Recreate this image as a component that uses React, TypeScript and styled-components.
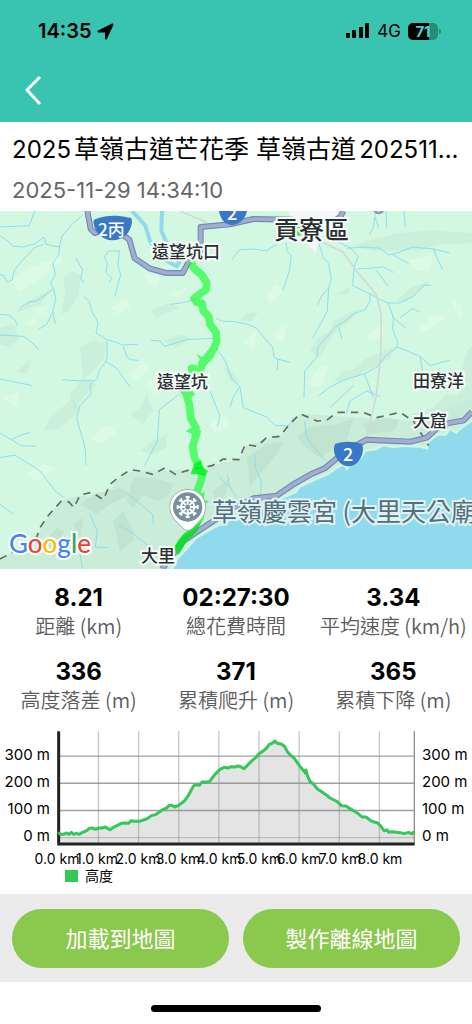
import React from "react";
import styled, { createGlobalStyle } from "styled-components";

const GlobalStyle = createGlobalStyle`
  * { box-sizing: border-box; }
  body {
    margin: 0;
    background: #ffffff;
    color: #000000;
    font-family: Inter, "Noto Sans CJK TC", sans-serif;
  }
  h1, p, dl, dd, dt { margin: 0; }
`;

const Screen = styled.main`
  display: flex;
  flex-direction: column;
  min-height: 100vh;
`;

/* ---------- header ---------- */

const Header = styled.header`
  background: #38c4b0;
  height: 122px;
`;

const StatusBar = styled.div`
  display: flex;
  justify-content: space-between;
  align-items: center;
  height: 62px;
  padding: 0 31px 0 38px;
`;

const StatusGroup = styled.div<{ $gap: number }>`
  display: flex;
  align-items: center;
  gap: ${(p) => p.$gap}px;
`;

const Clock = styled.span`
  font-size: 20px;
  line-height: 24px;
  font-weight: 600;
`;

const Network = styled.span`
  font-size: 17px;
  line-height: 24px;
`;

const BatteryWrap = styled.span`
  display: flex;
  align-items: center;
  gap: 1px;
`;

const Battery = styled.span`
  width: 30px;
  height: 17px;
  border-radius: 5px;
  background: linear-gradient(90deg, #000000 71%, #278a7b 71%);
  color: #4fd6c3;
  font-size: 15px;
  line-height: 17px;
  font-weight: 700;
  text-align: center;
`;

const BatteryTip = styled.span`
  width: 2px;
  height: 5px;
  border-radius: 0 2px 2px 0;
  background: #278a7b;
`;

const BackButton = styled.button`
  display: block;
  margin: 8px 0 0 16px;
  padding: 4px 8px;
  border: 0;
  background: none;
  svg { display: block; }
`;

/* ---------- title ---------- */

const TitleBlock = styled.section`
  height: 89px;
  padding: 10px 12px 0;
`;

const Title = styled.h1`
  font-size: 24px;
  line-height: 34px;
  font-weight: 400;
  white-space: nowrap;
  overflow: hidden;
  text-autospace: normal;
`;

const Han = styled.span`
  font-size: 25px;
`;

const RecordedAt = styled.p`
  margin-top: 10px;
  font-size: 22px;
  line-height: 26px;
  color: #666666;
`;

/* ---------- map ---------- */

const MapFrame = styled.section`
  position: relative;
  overflow: hidden;
  aspect-ratio: 472 / 358;
  background: #d3f8e2;
`;

const MapDrawing = styled.svg`
  display: block;
  width: 100%;
  height: 100%;
`;

const MapLabel = styled.span<{ $x: number; $y: number; $size: number; $tone?: string; $halo?: string; $weight?: number }>`
  position: absolute;
  left: ${(p) => (p.$x / 472) * 100}%;
  top: ${(p) => (p.$y / 358) * 100}%;
  transform: translateY(-50%);
  font-family: "Noto Sans CJK TC", sans-serif;
  font-size: ${(p) => p.$size}px;
  line-height: 1;
  font-weight: ${(p) => p.$weight ?? 500};
  color: ${(p) => p.$tone ?? "#2b2f33"};
  -webkit-text-stroke: 4px ${(p) => p.$halo ?? "#f4fbf7"};
  paint-order: stroke fill;
  white-space: nowrap;
`;

const ShieldText = styled(MapLabel)`
  -webkit-text-stroke: 0;
`;

const GoogleMark = styled.span`
  position: absolute;
  left: 9px;
  bottom: 9px;
  font-family: Lato, sans-serif;
  font-size: 26px;
  line-height: 34px;
  font-weight: 500;
  -webkit-text-stroke: 4px #ffffff;
  paint-order: stroke fill;
`;

const Letter = styled.span<{ $c: string }>`
  color: ${(p) => p.$c};
`;

/* ---------- statistics ---------- */

const Stats = styled.dl`
  display: grid;
  grid-template-columns: repeat(3, 1fr);
  row-gap: 18px;
  padding: 15px 0 0;
`;

const Stat = styled.div`
  display: flex;
  flex-direction: column-reverse;
  text-align: center;
`;

const StatLabel = styled.dt`
  font-family: "Noto Sans CJK TC", sans-serif;
  font-size: 20px;
  line-height: 28px;
  font-weight: 350;
  color: #5c5c5c;
  white-space: nowrap;
`;

const StatValue = styled.dd`
  font-size: 24px;
  line-height: 28px;
  font-weight: 700;
`;

/* ---------- elevation chart ---------- */

const ChartDrawing = styled.svg`
  display: block;
  width: 100%;
  margin-top: 14px;
  font-family: Inter, "Noto Sans CJK TC", sans-serif;
  font-size: 14px;
`;

/* ---------- actions ---------- */

const Actions = styled.footer`
  display: grid;
  grid-template-columns: 1fr 1fr;
  gap: 14px;
  margin-top: 4px;
  padding: 15px 12px 14px;
  background: #ebebeb;
`;

const ActionButton = styled.button`
  height: 59px;
  padding: 0 0 4px;
  border: 0;
  border-radius: 30px;
  background: #8bc84e;
  color: #ffffff;
  font-family: "Noto Sans CJK TC", sans-serif;
  font-size: 22px;
  font-weight: 400;
`;

const HomeIndicator = styled.div`
  width: 36%;
  height: 7px;
  margin: 23px auto 12px;
  border-radius: 4px;
  background: #000000;
`;

/* ---------- data ---------- */

const stats = [
  { value: "8.21", label: "距離 (km)" },
  { value: "02:27:30", label: "總花費時間" },
  { value: "3.34", label: "平均速度 (km/h)" },
  { value: "336", label: "高度落差 (m)" },
  { value: "371", label: "累積爬升 (m)" },
  { value: "365", label: "累積下降 (m)" },
];

const profile =
  "176,336 181,343 190,343 200,339 207,343 214,337 221,343 230,340 238,343 248,337 260,332 268,325 278,324 286,328 296,324 306,324 316,321 322,325 330,329 340,322 352,316 364,310 374,309 386,310 393,302 402,304 418,304 430,300 442,296 454,287 466,284 478,276 490,268 500,264 506,257 516,256 524,261 534,257 544,250 554,242 564,228 572,214 579,200 586,194 598,196 606,186 616,186 628,185 638,172 648,160 660,148 672,142 684,144 694,140 704,141 714,138 724,141 732,146 742,136 756,122 768,112 776,102 788,94 800,84 808,73 820,68 824,63 832,70 846,73 854,80 862,95 872,106 882,114 892,128 902,142 912,154 917,160 918,150 922,166 930,184 942,194 952,207 966,216 978,224 990,234 1002,240 1012,245 1024,257 1038,258 1050,266 1064,274 1076,282 1086,291 1098,291 1112,302 1122,306 1132,308 1142,318 1152,332 1162,330 1166,337 1176,335 1190,337 1200,338 1212,341 1226,337 1236,342 1240,337 1244,338";

const terrain = {
  dark: [
    "M190,200 220,180 244,196 236,250 206,300 184,310 196,250Z",
    "M240,410 280,386 318,400 312,440 280,480 250,500 244,450Z",
    "M210,550 250,500 290,520 250,560 222,600Z",
    "M0,350 40,340 56,380 30,410 0,400Z",
    "M150,620 220,560 240,600 180,650 130,660Z",
    "M50,480 96,440 80,490Z",
    "M100,260 160,230 120,280 60,300Z",
    "M490,390 540,370 572,380 530,410Z",
    "M450,300 500,276 540,290 470,320Z",
    "M1055,105 1120,85 1200,66 1300,58 1416,66 1416,96 1320,100 1260,118 1120,120Z",
    "M716,330 740,310 776,300 756,330Z",
    "M930,420 950,384 990,360 1000,330 1080,290 1070,310 1000,370 960,440Z",
    "M1000,510 1030,480 1060,476 1100,440 1190,404 1170,440 1080,490 1030,510Z",
    "M1190,270 1230,230 1290,210 1260,240 1220,270Z",
    "M1010,250 1050,224 1044,250Z",
    "M1384,480 1400,420 1416,404 1416,560 1370,556 1400,520Z",
    "M390,610 420,590 440,550 460,600 430,640Z",
    "M420,720 460,690 500,670 500,710 460,730Z",
    "M1230,610 1300,590 1340,550 1416,560 1416,620 1330,640 1250,640Z",
    "M670,460 700,490 720,520 690,510Z",
  ],
  light: [
    "M30,210 90,170 170,140 190,150 120,200 60,240Z",
    "M70,336 100,320 110,340 90,350Z",
    "M90,300 150,280 130,310Z",
    "M330,290 380,260 390,290 350,310Z",
    "M390,490 430,450 450,470 410,510Z",
    "M500,250 560,230 540,260Z",
    "M420,180 480,200 470,240Z",
    "M800,250 830,220 850,240 810,280Z",
    "M820,370 860,340 850,400Z",
    "M920,520 960,470 990,460 960,530Z",
    "M1100,370 1150,340 1150,380 1110,390Z",
    "M1250,360 1300,310 1340,320 1280,360Z",
    "M1350,260 1390,290 1380,330Z",
    "M270,680 330,640 350,670 300,700Z",
    "M80,790 130,760 170,770 110,810Z",
    "M630,640 670,610 690,640 650,670Z",
    "M1220,150 1300,130 1290,180 1250,180Z",
    "M440,520 480,490 520,500 460,550Z",
    "M730,390 770,360 760,420Z",
    "M10,560 60,540 50,590Z",
  ],
  ridge: [
    "M240,880 280,850 360,830 390,850 330,880 290,910Z",
    "M400,800 460,800 520,820 500,860 470,870 430,850 400,890 380,870Z",
    "M340,930 370,900 400,960 400,990 360,1020Z",
    "M740,740 800,700 850,690 830,730 780,790 750,830Z",
    "M890,680 920,650 1010,640 1060,620 1040,690 960,740 930,720Z",
    "M1090,640 1160,620 1200,626 1180,660 1100,670Z",
    "M130,1000 170,950 190,960 160,1030Z",
    "M220,940 250,920 240,980Z",
    "M640,840 690,800 670,870 650,900Z",
  ],
};

const rivers = [
  "M0,48 88,44 104,0",
  "M0,74 24,90 40,106 70,108 106,98 132,78 138,100 178,108 186,76 214,42 248,12",
  "M0,190 12,194 22,214 36,208 44,176 66,150 104,110 132,100",
  "M178,108 176,132 158,156 166,190 152,216 160,232 148,244 108,270 90,272 66,286 56,302",
  "M160,232 168,264 158,300 166,338 M158,304 140,340 114,356",
  "M0,310 26,312 44,326 54,346",
  "M0,372 70,376 98,396 116,416",
  "M228,142 248,178 242,202 252,216",
  "M252,256 268,272 276,302 294,334 288,366 320,386 322,436 316,454 298,478 292,502 270,520 274,548 240,584 230,620 238,650 250,690 256,718 258,762",
  "M322,386 350,394 368,402 382,440 392,446 416,448 M370,402 412,400",
  "M316,450 350,472 390,528",
  "M0,504 40,512 98,524 M186,506 240,510 278,508",
  "M360,120 326,120 312,138 322,156 318,184 336,202 328,214 M358,120 354,166 362,190 344,256",
  "M512,280 544,276 590,264",
  "M452,388 480,390 494,406 560,386 640,382",
  "M648,322 664,330 700,332 744,340 770,352 818,410 822,438 834,446 832,478 M832,444 870,454",
  "M650,414 676,450 696,504 720,528 700,556 690,590",
  "M720,528 730,590 800,618 826,644 866,644 880,620",
  "M630,540 660,616 652,646",
  "M696,146 718,116 760,114 800,120 834,96",
  "M858,96 862,122 874,134 868,180 848,240",
  "M956,94 970,140 986,158 994,204 986,230 982,300 938,382 M984,232 966,254 952,282",
  "M1000,86 1050,110 1074,136 1062,170 1058,224 1088,238 1110,248 1110,270 1096,296 1062,308 1034,332 1010,344 954,408 950,440 914,480 912,560 M1016,350 1026,384",
  "M1040,112 1094,108 1140,112 1166,132 1186,128 1236,108 1300,114 1350,126 M1180,132 1226,158 M1300,114 1318,156 1328,176",
  "M1074,174 1150,168 1180,184 M1128,176 1164,226",
  "M1110,248 1140,266 1166,276 1200,276 1240,256 1272,222 1292,224",
  "M1164,276 1180,318 1178,356 1192,390 1192,408 1260,436 1290,464 1348,448 M1176,316 1218,352 M1200,320 1238,292 1260,304 M1260,436 1268,480",
  "M1192,408 1156,436 1134,466 1094,488 1030,508 988,530 956,554 M1094,490 1120,560",
  "M1126,6 1120,50 1108,70 M1126,20 1136,50 M1158,0 1160,50 M1212,0 1216,46",
  "M0,666 34,686 64,672 90,664 M34,686 64,704 106,706",
  "M0,740 44,732 86,758 120,780 166,840 194,862 M0,880 40,910",
  "M540,548 478,596 472,690 434,764",
  "M380,846 458,910 460,940 M270,910 292,960 286,1008 322,1010 M240,1030 248,1074",
  "M354,940 400,968 450,1010",
  "M660,800 690,830 718,870 M682,790 690,830",
  "M914,630 920,680 944,710 976,750",
  "M990,590 1060,524 M1040,606 1050,570 1100,540 1140,556",
  "M764,730 766,770 784,810 782,850",
];

const coast =
  "M520,1074 534,1046 560,1018 590,984 640,954 700,926 750,904 796,884 848,864 890,846 900,830 940,812 990,790 1010,774 1030,764 1040,778 1062,758 1086,742 1098,722 1130,718 1150,706 1180,712 1210,708 1260,710 1284,716 1288,694 1314,674 1340,674 1350,658 1370,670 1380,658 1416,632V1074Z";

const boundary =
  "M0,1044 50,1018 110,980 120,950 146,912 184,870 206,872 222,890 240,852 276,844 310,866 330,820 360,796 392,776 420,780 458,790 496,770 526,790 570,776 636,764 670,744 716,746 736,700 770,706 800,680 840,676 860,650 900,608 950,630 980,628 1010,604 1090,604 1130,620 1200,604 1240,630 1286,704";

const mainRoads = [
  "M262,0 272,54 284,66 344,54 388,86 404,142 448,172 498,186 548,186 570,146 602,120 602,48 690,40 760,24 880,26",
  "M996,36 1022,16 1030,0",
  "M486,1074 550,990 640,930 700,892 760,862 830,854 880,820 936,788 974,772 1010,742 1060,708 1100,686 1232,692 1280,680 1324,640 1392,628 1416,602",
];

const route =
  "M572,154 584,174 606,192 620,216 618,236 582,262 590,274 606,276 610,300 626,316 630,340 648,364 650,390 642,412 622,438 606,456 602,476 584,490 570,512 558,546 568,580 572,620 588,652 586,680 578,706 584,742 600,770 606,800 590,846 606,880 600,920 576,960 546,990 530,1018";

function MapArt() {
  return (
    <MapDrawing viewBox="0 0 1416 1074" preserveAspectRatio="xMidYMid slice" aria-hidden="true">
      <path d="M0,1050 120,960 146,912 184,870 240,852 310,866 360,796 400,780 570,776 716,746 736,706 840,676 900,608 1240,630 1416,560V1074H0Z" fill="#c9edd9" />
      {terrain.dark.map((d) => <path key={d} d={d} fill="#c4e9d5" opacity=".6" />)}
      {terrain.light.map((d) => <path key={d} d={d} fill="#e0fbe5" opacity=".7" />)}
      {terrain.ridge.map((d) => <path key={d} d={d} fill="#bcdfcc" opacity=".7" />)}
      <path d={coast} fill="#90daee" stroke="#d0f5e0" strokeWidth="16" paintOrder="stroke" strokeLinejoin="round" />
      <path d="M868,0 1030,0 1010,40 956,80 948,128 920,96 870,80Z" fill="#f4f6f7" />
      <path d="M888,44h16v30h-16z" fill="#3fe04d" />
      <g fill="none" stroke="#8fdcf0" strokeWidth="3" strokeLinejoin="round">
        {rivers.map((d) => <path key={d} d={d} />)}
      </g>
      <path d="M396,0 436,44 450,90 470,124 500,150 530,166 538,154 520,130M486,0 484,60 500,96" fill="none" stroke="#90daee" strokeWidth="12" strokeLinejoin="round" />
      <path d="M540,0 620,34M960,90 1028,122 1070,180 1128,250 1144,310 1142,440 1128,560 1098,682" fill="none" stroke="#d0d9d8" strokeWidth="5" />
      <path d={boundary} fill="none" stroke="#626b67" strokeWidth="5" strokeDasharray="22 18" strokeLinejoin="round" />
      {mainRoads.map((d) => (
        <g key={d} fill="none" strokeLinejoin="round">
          <path d={d} stroke="#7688b3" strokeWidth="18" />
          <path d={d} stroke="#a0aed0" strokeWidth="11" />
        </g>
      ))}
      <circle cx="1136" cy="-8" r="14" fill="none" stroke="#8795bd" strokeWidth="8" />
      <g fill="#00ff1e" opacity=".6">
        <path d={route} fill="none" stroke="#00ff1e" strokeWidth="23" strokeLinejoin="round" />
        <path d="M590,428 610,440 650,418 640,440 612,470ZM562,466 576,460 590,462 600,490 570,500ZM538,540 570,530 586,550 562,570ZM556,660 580,648 604,660 594,690 576,670ZM600,850 614,840 612,864 626,872 600,890Z" />
      </g>
      <path d="M582,758 604,748 606,768 624,780 616,796 594,790 572,790Z" fill="#00f01c" fillOpacity=".8" />
      <path d="M604,930 590,964 560,990 536,1032 520,1012 550,970 580,950Z" fill="#00d81c" fillOpacity=".65" />
      <g fill="#3978c5">
        <path d="M288,24C320,12 352,12 386,20C392,18 396,24 396,30C394,68 366,88 338,88C308,88 284,66 280,34C280,28 284,24 288,24Z" />
        <path d="M656,-6H742C738,26 716,42 696,42C676,42 660,26 656,-6Z" />
        <path d="M1006,698C1030,690 1060,690 1084,698C1090,700 1090,720 1086,732C1078,754 1062,766 1046,766C1028,766 1012,752 1004,730C1000,718 1002,704 1006,698Z" />
      </g>
      <path d="M563,958C555,958 550,954 545,948L522,924A54,54 0 1 1 604,924L581,948C576,954 571,958 563,958Z" fill="#ffffff" stroke="#9fb5ae" strokeWidth="3" />
      <circle cx="563" cy="888" r="44" fill="#78909c" />
      <g fill="none" stroke="#ffffff" strokeWidth="6" transform="translate(563 888)">
        <circle r="20" />
        {[0, 45, 90, 135, 180, 225, 270, 315].map((a) => (
          <path key={a} d="M0,-7V-33M-6,-30H6" transform={`rotate(${a})`} />
        ))}
      </g>
      <circle cx="563" cy="888" r="6" fill="#78909c" />
    </MapDrawing>
  );
}

const levels = [300, 200, 100, 0];
const kilometres = [0, 1, 2, 3, 4, 5, 6, 7, 8];

function ElevationChart() {
  return (
    <ChartDrawing viewBox="0 0 472 162" role="img" aria-label="高度">
      {/* plot area, drawn at three units per pixel */}
      <g transform="translate(0 -8) scale(.333333)">
        <polygon points={`176,370 ${profile} 1244,370`} fill="#e4e4e4" />
        {levels.map((l) => (
          <path key={l} d={`M176,${353 - l * 0.816}H1244`} stroke="#808080" strokeOpacity={l ? 0.75 : 0.4} strokeWidth="4" />
        ))}
        {kilometres.slice(1).map((k) => (
          <path key={k} d={`M${175 + k * 120.4},34V370`} stroke="#909090" strokeOpacity=".5" strokeWidth="4" />
        ))}
        <path d="M1243,34V370" stroke="#909090" strokeWidth="4" />
        <path d="M176,34V372H1244" fill="none" stroke="#222222" strokeWidth="9" />
        <polyline points={profile} fill="none" stroke="#34c759" strokeWidth="9" strokeLinejoin="round" />
      </g>
      {levels.map((l, i) => (
        <g key={l} fontSize="15">
          <text x="50" y={32 + i * 27} textAnchor="end">{l} m</text>
          <text x="422" y={32 + i * 27}>{l} m</text>
        </g>
      ))}
      {kilometres.map((k) => (
        <text key={k} x={57 + Math.round(k * 40.4)} y="136" textAnchor="middle">{k}.0 km</text>
      ))}
      <rect x="65" y="142" width="13" height="12" fill="#34c759" />
      <text x="85" y="153">高度</text>
    </ChartDrawing>
  );
}

export default function App() {
  return (
    <Screen>
      <GlobalStyle />
      <Header>
        <StatusBar>
          <StatusGroup $gap={6}>
            <Clock>14:35</Clock>
            <svg width="17" height="17" viewBox="0 0 17 17" aria-hidden="true">
              <path d="M15.500 1.500 9 15.500V8.500H1.500Z" stroke="#000000" strokeWidth="2" strokeLinejoin="round" />
            </svg>
          </StatusGroup>
          <StatusGroup $gap={7}>
            <svg width="24" height="16" viewBox="0 0 24 16" aria-hidden="true">
              <rect x="0" y="10" width="4" height="5" rx="1" />
              <rect x="6" y="7" width="4" height="8" rx="1" />
              <rect x="13" y="4" width="4" height="11" rx="1" />
              <rect x="19" y="0" width="4" height="15" rx="1" />
            </svg>
            <Network>4G</Network>
            <BatteryWrap>
              <Battery>71</Battery>
              <BatteryTip />
            </BatteryWrap>
          </StatusGroup>
        </StatusBar>
        <BackButton type="button" aria-label="返回">
          <svg width="18" height="32" viewBox="0 0 18 32" fill="none" stroke="#ffffff" strokeWidth="3">
            <path d="M16 3 3 16 16 30" strokeLinejoin="round" />
          </svg>
        </BackButton>
      </Header>

      <TitleBlock>
        <Title>2025<Han>草嶺古道芒花季 草嶺古道</Han>202511...</Title>
        <RecordedAt>2025-11-29 14:34:10</RecordedAt>
      </TitleBlock>

      <MapFrame>
        <MapArt />
        <ShieldText $x={98} $y={17} $size={17} $tone="#ffffff">2丙</ShieldText>
        <ShieldText $x={227} $y={1} $size={18} $tone="#ffffff">2</ShieldText>
        <ShieldText $x={343} $y={242} $size={18} $tone="#ffffff">2</ShieldText>
        <MapLabel $x={152} $y={39} $size={17}>遠望坑口</MapLabel>
        <MapLabel $x={274} $y={17} $size={25}>貢寮區</MapLabel>
        <MapLabel $x={157} $y={169} $size={17}>遠望坑</MapLabel>
        <MapLabel $x={413} $y={168} $size={17}>田寮洋</MapLabel>
        <MapLabel $x={413} $y={208} $size={17}>大窟</MapLabel>
        <MapLabel $x={141} $y={343} $size={17}>大里</MapLabel>
        <MapLabel $x={212} $y={299} $size={25} $tone="#546e7a" $halo="#dff2f4" $weight={400}>草嶺慶雲宮 (大里天公廟)</MapLabel>
        <GoogleMark>
          <Letter $c="#4285f4">G</Letter>
          <Letter $c="#ea4335">o</Letter>
          <Letter $c="#fbbc04">o</Letter>
          <Letter $c="#4285f4">g</Letter>
          <Letter $c="#34a853">l</Letter>
          <Letter $c="#ea4335">e</Letter>
        </GoogleMark>
      </MapFrame>

      <Stats>
        {stats.map((s) => (
          <Stat key={s.label}>
            <StatLabel>{s.label}</StatLabel>
            <StatValue>{s.value}</StatValue>
          </Stat>
        ))}
      </Stats>

      <ElevationChart />

      <Actions>
        <ActionButton type="button">加載到地圖</ActionButton>
        <ActionButton type="button">製作離線地圖</ActionButton>
      </Actions>
      <HomeIndicator />
    </Screen>
  );
}
